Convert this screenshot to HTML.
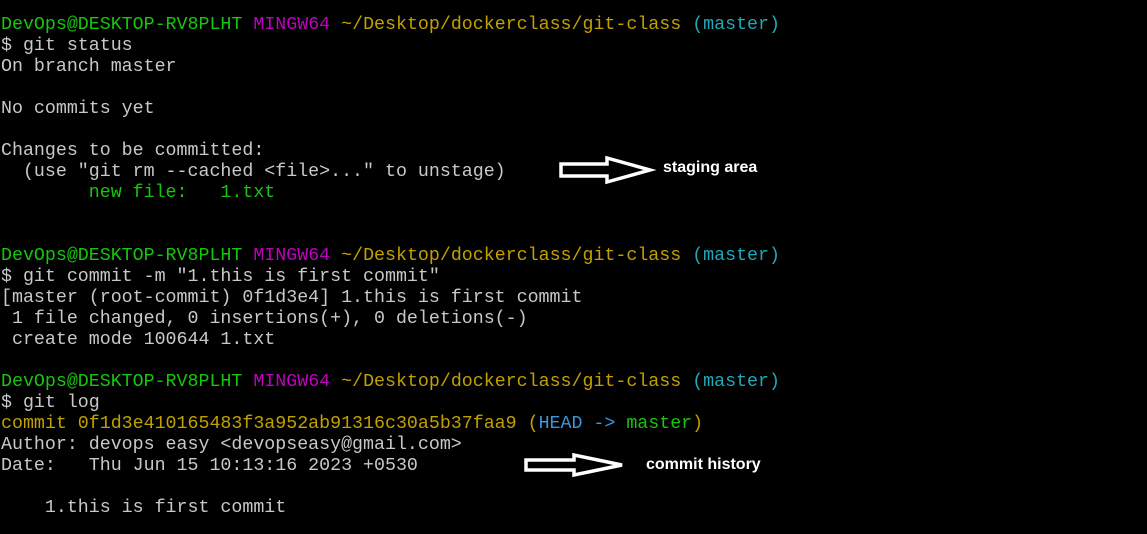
<!DOCTYPE html>
<html><head><meta charset="utf-8"><style>
html,body{margin:0;padding:0;background:#000;width:1147px;height:534px;overflow:hidden}
pre{margin:0;position:absolute;left:1px;top:15px;font-family:"Liberation Mono",monospace;font-size:18.3px;line-height:21px;color:#c8c8c8}
.g{color:#16c60c}.m{color:#c000c0}.y{color:#c1a000}.c{color:#20a8b8}.cy{color:#3a96dd}
.lbl{position:absolute;font-family:"Liberation Sans",sans-serif;font-weight:bold;font-size:16px;color:#fff}
</style></head><body>
<pre><span class="g">DevOps@DESKTOP-RV8PLHT</span> <span class="m">MINGW64</span> <span class="y">~/Desktop/dockerclass/git-class</span> <span class="c">(master)</span>
$ git status
On branch master

No commits yet

Changes to be committed:
  (use "git rm --cached &lt;file&gt;..." to unstage)
        <span class="g">new file:   1.txt</span>


<span class="g">DevOps@DESKTOP-RV8PLHT</span> <span class="m">MINGW64</span> <span class="y">~/Desktop/dockerclass/git-class</span> <span class="c">(master)</span>
$ git commit -m "1.this is first commit"
[master (root-commit) 0f1d3e4] 1.this is first commit
 1 file changed, 0 insertions(+), 0 deletions(-)
 create mode 100644 1.txt

<span class="g">DevOps@DESKTOP-RV8PLHT</span> <span class="m">MINGW64</span> <span class="y">~/Desktop/dockerclass/git-class</span> <span class="c">(master)</span>
$ git log
<span class="y">commit 0f1d3e410165483f3a952ab91316c30a5b37faa9 (</span><span class="cy">HEAD -&gt; </span><span class="g">master</span><span class="y">)</span>
Author: devops easy &lt;devopseasy@gmail.com&gt;
Date:   Thu Jun 15 10:13:16 2023 +0530

    1.this is first commit</pre>
<svg style="position:absolute;left:0;top:0" width="1147" height="534">
<polygon points="561,164 607,164 607,158 650,170 607,182 607,176 561,176" fill="none" stroke="#fff" stroke-width="3.5"/>
<polygon points="526,460 574,460 574,455 622,465 574,475 574,470 526,470" fill="none" stroke="#fff" stroke-width="3.5"/>
</svg>
<div class="lbl" style="left:663px;top:159px">staging area</div>
<div class="lbl" style="left:646px;top:456px">commit history</div>
</body></html>
